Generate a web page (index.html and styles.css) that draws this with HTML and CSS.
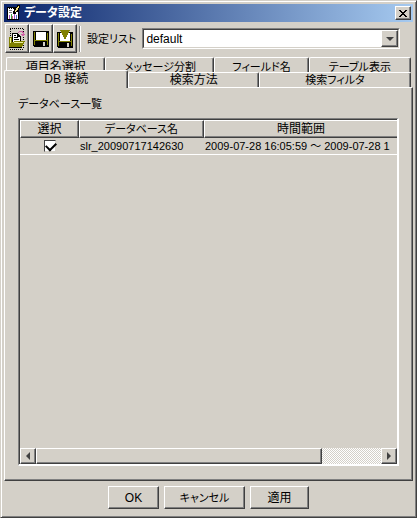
FILE: index.html
```html
<!DOCTYPE html>
<html lang="ja">
<head>
    <meta charset="UTF-8" />
    <meta name="viewport" content="width=device-width, initial-scale=1.0"/>
    <title>データ設定</title>
    <link rel="stylesheet" href="styles.css">
</head>
<body>
    <div class="window">
        <header class="title-bar">
            <svg class="app-icon" width="14" height="16" viewBox="0 0 14 16" shape-rendering="crispEdges" aria-hidden="true">
                <path fill="#000" d="M0 2h12v13H0z"/>
                <path fill="#fff" d="M1 4h10v10H1z"/>
                <path fill="#fff" d="M1 3h1v1H1zM3 3h1v1H3zM5 3h1v1H5z"/>
                <path fill="#808080" d="M2 5h3v1H2zM2 7h3v1H2z"/>
                <path fill="#a050c0" d="M2 10h1v4H2zM7 9h1v5H7z"/>
                <path fill="#40a040" d="M4 9h1v5H4z"/>
                <path fill="#d06080" d="M5 11h1v3H5z"/>
                <path fill="#5070c0" d="M9 10h1v4H9z"/>
                <path fill="#000" d="M10 0h3v3h-1v2h-1v2H9v2H6V6h1V4h1V2h2z"/>
                <path fill="#f0e080" d="M11 1h1v2h-1v2h-1v1H9v1H8V5h1V3h1V2h1z"/>
            </svg>
            <h1>データ設定</h1>
            <button class="close-btn" type="button" aria-label="閉じる">
                <svg width="8" height="7" viewBox="0 0 8 7" shape-rendering="crispEdges" aria-hidden="true">
                    <path d="M0 0h2v1h1v1h2V1h1V0h2v1H7v1H6v1H5v1h1v1h1v1h1v1H6V6H5V5H3v1H2v1H0V6h1V5h1V4h1V3H2V2H1V1H0z"/>
                </svg>
            </button>
        </header>

        <div class="toolbar">
            <button class="tool-btn" type="button" aria-label="開く">
                <svg width="17" height="22" viewBox="0 0 17 22" shape-rendering="crispEdges" aria-hidden="true">
                    <path fill="none" stroke="#000" stroke-dasharray="1 1" d="M1 .5h14M1.500 1v20M14.500 1v20M1 21.500h14"/>
                    <path fill="#000" d="M3 5h6v1h1v1h1v1h1v7H3z"/>
                    <path fill="#fff" d="M4 6h4v3h3v5H4z"/>
                    <path fill="#000" d="M5 7h2v1H5zM5 9h4v1H5zM5 11h5v1H5z"/>
                    <path fill="#808000" d="M0 9h3v5h2v-1h11v1h-1v2h-1v2h-1v1H0z"/>
                    <path fill="#f0f0a0" d="M1 10h1v5H1zM5 14h9v1H5z"/>
                    <path fill="#000" d="M0 19h13v1H0z"/>
                    <path fill="#d060a8" d="M9 4h1V3h4v1h1v2h1v1h-1v1h-2V7h-1V6h2V5h-1V4h-3v1H9z"/>
                </svg>
            </button>
            <button class="tool-btn" type="button" aria-label="保存">
                <svg width="16" height="16" viewBox="0 0 16 16" shape-rendering="crispEdges" aria-hidden="true">
                    <path d="M0 0h16v16H1v-1H0z"/>
                    <path fill="#808000" d="M1 1h1v13H1zM14 2h1v12h-1zM2 9h12v1H2z"/>
                    <path fill="#fff" d="M3 1h10v8H3z"/>
                    <path fill="#d4d0c8" d="M10 11h2v4h-2z"/>
                </svg>
            </button>
            <button class="tool-btn" type="button" aria-label="別名で保存">
                <svg width="16" height="18" viewBox="0 0 16 18" shape-rendering="crispEdges" aria-hidden="true">
                    <path d="M0 2h16v16H1v-1H0z"/>
                    <path fill="#808000" d="M1 3h1v13H1zM14 4h1v12h-1zM2 11h12v1H2z"/>
                    <path fill="#fff" d="M3 3h10v8H3z"/>
                    <path fill="#d4d0c8" d="M10 13h2v4h-2z"/>
                    <path fill="#808000" d="M3 0h10v1h-1v2h-1v2h-1v2H9v2H7V7H6V5H5V3H4V1H3z"/>
                </svg>
            </button>
            <span class="separator"></span>
            <label class="kana" for="settingList">設定リスト</label>
            <div class="select-box">
                <select id="settingList">
                    <option>default</option>
                </select>
                <span class="select-arrow"></span>
            </div>
        </div>

        <main class="tabs">
            <div class="tab-row back" role="tablist">
                <button class="tab" type="button" role="tab">項目名選択</button>
                <button class="tab kana" type="button" role="tab">メッセージ分割</button>
                <button class="tab kana" type="button" role="tab">フィールド名</button>
                <button class="tab kana" type="button" role="tab">テーブル表示</button>
            </div>
            <div class="tab-row front" role="tablist">
                <button class="tab active" type="button" role="tab" aria-selected="true">DB 接続</button>
                <button class="tab" type="button" role="tab">検索方法</button>
                <button class="tab kana" type="button" role="tab">検索フィルタ</button>
            </div>
            <section class="panel">
                <h2 class="kana">データベース一覧</h2>
                <div class="list">
                    <div class="list-view">
                        <table>
                            <colgroup>
                                <col class="col-check"><col class="col-name"><col class="col-range">
                            </colgroup>
                            <thead>
                                <tr><th>選択</th><th class="kana">データベース名</th><th>時間範囲</th></tr>
                            </thead>
                            <tbody>
                                <tr>
                                    <td class="check-cell"><input type="checkbox" aria-label="slr_20090717142630" checked></td>
                                    <td>slr_20090717142630</td>
                                    <td>2009-07-28 16:05:59 ～ 2009-07-28 1</td>
                                </tr>
                            </tbody>
                        </table>
                    </div>
                    <div class="scrollbar">
                        <button class="scroll-btn left" type="button" aria-label="左へ"></button>
                        <div class="scroll-track"><div class="scroll-thumb"></div></div>
                        <button class="scroll-btn right" type="button" aria-label="右へ"></button>
                    </div>
                </div>
            </section>
        </main>

        <footer class="actions">
            <button class="btn" type="button">OK</button>
            <button class="btn cancel kana" type="button">キャンセル</button>
            <button class="btn apply" type="button">適用</button>
        </footer>
    </div>
</body>
</html>
```
FILE: styles.css
```css
* {
    box-sizing: border-box;
    margin: 0;
    padding: 0;
}

body {
    font-family: "Liberation Sans", "Noto Sans CJK JP", sans-serif;
    font-size: 12px;
    line-height: 16px;
    font-feature-settings: "palt";
    color: #000;
    background: #d4d0c8;
}

button,
select {
    font: inherit;
    font-feature-settings: inherit;
    color: inherit;
    background: #d4d0c8;
    border-radius: 0;
}

.window {
    display: flex;
    flex-direction: column;
    height: 100vh;
    padding: 3px;
    border: 1px solid #d4d0c8;
    border-right-color: #404040;
    border-bottom-color: #404040;
    box-shadow: inset 1px 1px #fff, inset -1px -1px #808080;
}

.title-bar {
    display: flex;
    align-items: center;
    height: 18px;
    padding: 0 2px 0 3px;
    gap: 3px;
    background: linear-gradient(to right, #0a246a, #a6caf0);
}

.title-bar h1 {
    flex: 1;
    font-size: 12px;
    font-weight: 700;
    color: #fff;
}

.close-btn,
.tool-btn,
.btn,
.scroll-btn,
.scroll-thumb,
.select-arrow {
    display: flex;
    align-items: center;
    justify-content: center;
    background: #d4d0c8;
    border: 1px solid #fff;
    border-right-color: #404040;
    border-bottom-color: #404040;
    box-shadow: inset -1px -1px #808080;
}

.close-btn {
    width: 16px;
    height: 14px;
}

.toolbar {
    display: flex;
    align-items: center;
    margin: 2px 0 4px;
    padding-left: 1px;
}

.tool-btn {
    width: 24px;
    height: 29px;
}

.separator {
    width: 2px;
    height: 26px;
    margin: 0 6px 0 2px;
    border-left: 1px solid #808080;
    border-right: 1px solid #fff;
}

.select-box {
    position: relative;
    flex: 1;
    height: 21px;
    margin: 0 13px 0 6px;
    border: 1px solid #808080;
    border-right-color: #fff;
    border-bottom-color: #fff;
}

.select-box select {
    display: block;
    width: 100%;
    height: 19px;
    padding: 0 2px;
    appearance: none;
    background: #fff;
    border: 1px solid #404040;
    border-right-color: #d4d0c8;
    border-bottom-color: #d4d0c8;
}

.select-arrow {
    position: absolute;
    top: 1px;
    right: 1px;
    width: 17px;
    height: 17px;
    pointer-events: none;
}

.select-arrow::before {
    content: "";
    border: 4px solid transparent;
    border-top-color: #404040;
    border-bottom-width: 0;
}

.tabs {
    display: flex;
    flex: 1;
    flex-direction: column;
    min-height: 0;
}

.tab-row {
    display: flex;
    padding: 0 2px;
}

.tab {
    border: 1px solid #fff;
    border-right-color: #404040;
    border-bottom: none;
    border-radius: 2px 2px 0 0;
    box-shadow: inset -1px 0 #808080;
}

.back .tab {
    flex: 99;
    height: 15px;
    overflow: hidden;
    line-height: 18px;
}

.back .tab:nth-child(2) {
    flex-grow: 109;
}

.back .tab:nth-child(3) {
    flex-grow: 94;
}

.back .tab:nth-child(4) {
    flex-grow: 102;
}

.front {
    align-items: flex-end;
    padding-left: 0;
}

.front .tab {
    flex: 130;
    height: 15px;
    line-height: 15px;
}

.front .tab:last-child {
    flex-grow: 152;
}

.front .tab.active {
    position: relative;
    flex-grow: 124;
    height: 18px;
    margin: -2px 0 -1px;
    background: #d4d0c8;
    line-height: 17px;
}

.panel {
    display: flex;
    flex: 1;
    flex-direction: column;
    min-height: 0;
    padding: 8px 13px 14px;
    border: 1px solid #fff;
    border-right-color: #404040;
    border-bottom-color: #404040;
    box-shadow: inset -1px -1px #808080;
}

.panel h2 {
    margin-bottom: 6px;
    font-weight: 400;
}

.list {
    display: flex;
    flex: 1;
    flex-direction: column;
    border: 1px solid #808080;
    border-right: 2px solid #fff;
    border-bottom: 2px solid #fff;
    box-shadow: inset 1px 1px #404040;
    padding: 1px 0 0 1px;
}

.list-view {
    flex: 1;
    overflow: hidden;
}

table {
    width: 100%;
    table-layout: fixed;
    border-collapse: separate;
    border-spacing: 0;
}

.col-check {
    width: 59px;
}

.col-name {
    width: 125px;
}

th {
    height: 18px;
    font-weight: 400;
    line-height: 15px;
    border: 1px solid #fff;
    border-right-color: #404040;
    border-bottom-color: #404040;
    box-shadow: inset -1px -1px #808080;
}

th:last-child {
    border-right: none;
    box-shadow: inset 0 -1px #808080;
}

td {
    height: 17px;
    padding-left: 1px;
    overflow: hidden;
    font-size: 11px;
    line-height: 16px;
    white-space: nowrap;
    border-bottom: 1px solid #fff;
}

.check-cell {
    padding: 0;
}

.check-cell input {
    display: block;
    width: 12px;
    height: 12px;
    margin: 0 auto;
    appearance: none;
    background: #fff;
    border: 1px solid #404040;
    border-right-color: #d4d0c8;
    border-bottom-color: #d4d0c8;
}

.check-cell input:checked::before {
    content: "";
    display: block;
    width: 8px;
    height: 5px;
    margin: 1px;
    border: solid #000;
    border-width: 0 0 2px 2px;
    transform: rotate(-45deg);
}

.scrollbar {
    display: flex;
    height: 16px;
}

.scroll-btn {
    width: 16px;
}

.scroll-btn::before {
    content: "";
    border: 4px solid transparent;
}

.scroll-btn.left::before {
    border-left-width: 0;
    border-right-color: #404040;
}

.scroll-btn.right::before {
    border-right-width: 0;
    border-left-color: #404040;
}

.scroll-track {
    flex: 1;
    background: repeating-conic-gradient(#fff 0 25%, #d4d0c8 0 50%) 0 0 / 2px 2px;
}

.scroll-thumb {
    width: 83%;
    height: 16px;
}

.actions {
    display: flex;
    justify-content: center;
    gap: 5px;
    padding: 5px 0;
}

.btn {
    width: 51px;
    height: 23px;
}

.cancel {
    width: 81px;
}

.apply {
    width: 59px;
}

/* labels with kana run wide, so they are set a size smaller */
.kana {
    font-size: 11px;
}
```
